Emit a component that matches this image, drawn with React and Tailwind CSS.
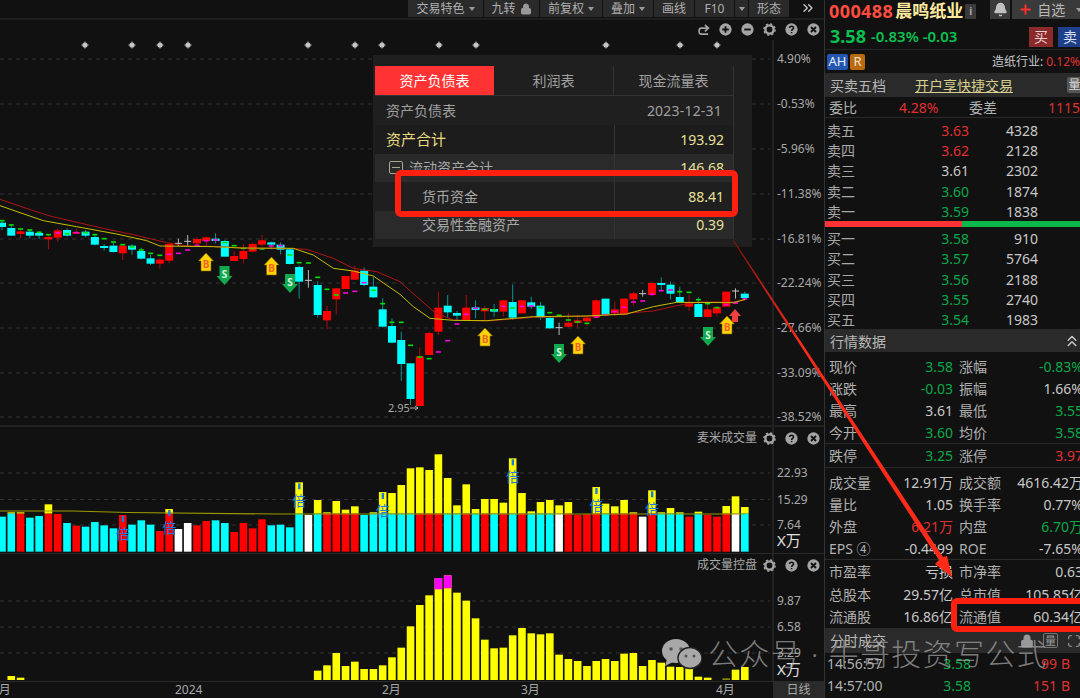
import { Bell, Plus, Lock, ChevronsRight, ChevronsUp, Maximize } from 'lucide-react';

// x position of bar i, shared by all three chart panes
const barX = (i) => 2 + i * 9.285;

// [type, wickTop, bodyTop, bodyBottom, wickBottom, markerColour, markerY]
const CANDLES_A = [
  ['c', 92, 98, 111, 120, 'g', 92], ['c', 104, 114, 137, 137, 'g', 105], ['r', 115, 124, 132, 145, 'g', 117], ['c', 118, 125, 137, 146, 'g', 120],
  ['c', 124, 129, 137, 147, 'g', 127], ['r', 135, 141, 148, 178, 'g', 134], ['r', 115, 121, 143, 155, 'm', 129], ['c', 115, 120, 137, 140, 'g', 131],
  ['r', 115, 126, 131, 132, 'm', 128], ['c', 120, 125, 137, 142, 'g', 128], ['c', 135, 141, 164, 166, 'g', 134], ['c', 162, 168, 174, 182, 'g', 146],
  ['c', 158, 167, 186, 188, 'g', 156], ['r', 165, 167, 190, 210, 'g', 164], ['c', 163, 167, 179, 194, 'g', 171], ['c', 173, 183, 206, 208, 'g', 180],
  ['c', 193, 205, 221, 225, 'g', 190], ['r', 205, 209, 221, 236, 'g', 196], ['r', 160, 162, 212, 219, 'm', 193], ['w', 146, 160, 161, 168, 'm', 190],
  ['w', 135, 154, 155, 168, 'm', 180], ['r', 142, 147, 160, 170, 'm', 166], ['r', 140, 142, 153, 170, 'm', 152], ['c', 130, 146, 153, 160, 'm', 150],
  ['c', 150, 153, 200, 200, 'g', 158], ['r', 183, 198, 213, 213, 'g', 167], ['r', 163, 183, 207, 220, 'g', 175], ['r', 158, 162, 185, 185, 'g', 176],
  ['r', 135, 151, 164, 170, 'g', 177], ['c', 155, 157, 164, 178, 'm', 168], ['c', 157, 164, 179, 193, 'm', 167], ['c', 175, 178, 222, 224, 'g', 195],
  ['c', 226, 231, 275, 326, 'g', 218], ['w', 240, 271, 272, 293, 'g', 219], ['c', 274, 285, 375, 383, 'g', 262], ['r', 347, 363, 391, 418, 'g', 298],
  ['r', 295, 295, 328, 373, 'g', 315], ['r', 258, 258, 297, 297, 'm', 309], ['r', 226, 242, 269, 270, 'm', 304], ['c', 232, 242, 285, 289, 'm', 278],
  ['c', 260, 290, 322, 324, 'g', 301], ['c', 325, 358, 410, 413, 'g', 341], ['c', 385, 408, 458, 460, 'g', 397],
].map((c) => [c[0], 190 + c[1] / 3, 190 + c[2] / 3, 190 + c[3] / 3, 190 + c[4] / 3, c[5], 190 + c[6] / 3]);

const CANDLES_B = [
  ['c', 275, 300, 372, 423, 'g', 247], ['c', 370, 370, 477, 495, 'g', 316], ['r', 322, 349, 498, 498, 'g', 351], ['r', 275, 279, 345, 345, 'g', 356],
  ['r', 155, 203, 275, 285, 'm', 336], ['c', 165, 197, 217, 233, 'm', 302], ['c', 213, 219, 227, 243, 'm', 252], ['r', 165, 203, 243, 243, 'm', 223],
  ['c', 181, 202, 210, 235, 'm', 205], ['r', 198, 204, 214, 240, 'g', 208], ['c', 192, 207, 215, 230, 'g', 210], ['r', 180, 181, 215, 230, 'm', 199],
  ['c', 133, 186, 233, 240, 'g', 204], ['r', 180, 181, 220, 220, 'm', 199], ['c', 170, 187, 200, 207, 'm', 198], ['c', 186, 197, 233, 240, 'g', 203],
  ['c', 233, 233, 265, 267, 'g', 218], ['w', 248, 263, 264, 285, 'g', 226], ['r', 218, 248, 260, 262, 'g', 240], ['r', 224, 241, 249, 263, 'g', 246],
  ['r', 225, 233, 244, 258, 'g', 250], ['r', 178, 181, 232, 235, 'm', 231], ['c', 176, 176, 224, 226, 'm', 224], ['r', 185, 208, 220, 228, 'm', 215],
  ['r', 176, 176, 224, 224, 'm', 202], ['r', 155, 160, 178, 197, 'm', 186], ['w', 150, 161, 162, 170, 'm', 183], ['r', 125, 129, 165, 168, 'm', 163],
  ['c', 112, 129, 135, 152, 'm', 152], ['c', 125, 134, 161, 178, 'm', 150], ['c', 140, 171, 187, 187, 'g', 155], ['r', 165, 187, 200, 213, 'g', 157],
  ['c', 172, 192, 231, 231, 'g', 179], ['r', 188, 208, 231, 233, 'g', 191], ['r', 198, 202, 220, 230, 'g', 203], ['r', 155, 155, 200, 200, 'm', 194],
  ['w', 145, 153, 154, 176, 'm', 189], ['c', 155, 161, 174, 181, 'm', 177],
].map((c) => [c[0], 240 + c[1] / 3, 240 + c[2] / 3, 240 + c[3] / 3, 240 + c[4] / 3, c[5], 240 + c[6] / 3]);

const CANDLES = [...CANDLES_A, ...CANDLES_B];

const pts = (list, ox, oy) => list.map(([x, y]) => `${ox + x / 3},${oy + y / 3}`).join(' ');

const RED_MA =
  pts([[0, 28], [100, 62], [150, 78], [300, 113], [400, 134], [500, 158], [560, 168], [630, 169], [760, 175], [860, 175], [920, 178], [1000, 205], [1060, 235], [1130, 245], [1200, 275]], 0, 190) +
  ' ' +
  pts([[50, 170], [105, 218], [160, 240], [260, 243], [400, 232], [500, 230], [580, 228], [650, 222], [760, 213], [830, 197], [900, 186], [1000, 186], [1035, 180]], 400, 240);

const YELLOW_MA =
  pts([[0, 47], [60, 68], [130, 92], [230, 110], [350, 132], [440, 152], [480, 168], [640, 170], [720, 174], [880, 175], [940, 195], [1000, 235], [1060, 243], [1120, 258], [1200, 313]], 0, 190) +
  ' ' +
  pts([[40, 200], [90, 235], [160, 241], [260, 242], [400, 230], [560, 228], [680, 222], [760, 200], [830, 187], [1000, 188], [1035, 178]], 400, 240);

const VOLUME = [
  [275, 'c'], [262, 'c'], [262, 'r'], [278, 'c'], [273, 'c'], [238, 'r'], [267, 'r'], [294, 'c'], [302, 'r'], [305, 'c'], [291, 'c'], [301, 'c'], [310, 'c'], [270, 'r'],
  [299, 'c'], [286, 'c'], [299, 'c'], [318, 'r'], [252, 'r'], [312, 'w'], [294, 'w'], [301, 'r'], [288, 'r'], [286, 'c'], [294, 'c'], [321, 'r'], [294, 'r'], [310, 'r'],
  [283, 'r'], [301, 'c'], [299, 'c'], [307, 'c'], [172, 'c'], [270, 'w'], [225, 'c'], [262, 'r'], [228, 'r'], [254, 'r'], [244, 'r'], [270, 'c'], [262, 'c'], [201, 'c'],
  [204, 'c'], [180, 'c'], [130, 'c'], [127, 'r'], [135, 'r'], [88, 'r'], [159, 'c'], [241, 'c'], [178, 'r'], [252, 'c'], [222, 'r'], [222, 'c'], [233, 'r'], [100, 'c'],
  [204, 'r'], [259, 'c'], [231, 'c'], [225, 'c'], [241, 'w'], [231, 'r'], [270, 'r'], [268, 'r'], [186, 'r'], [236, 'c'], [244, 'r'], [225, 'r'], [262, 'r'], [275, 'w'],
  [196, 'r'], [262, 'c'], [249, 'c'], [262, 'c'], [275, 'r'], [260, 'c'], [270, 'r'], [275, 'r'], [243, 'r'], [214, 'w'], [246, 'c'],
];

const BEI = [13, 18, 32, 41, 55, 64, 70];

// index -> top of the bar, zoomed units
const CONTROL = {
  1: 753, 2: 758, 34: 737, 35: 721, 36: 684, 37: 723, 38: 710, 39: 732, 40: 732, 41: 721, 42: 697, 43: 668, 44: 604, 45: 540, 46: 511, 47: 459, 48: 451, 49: 503, 50: 527,
  51: 580, 52: 644, 53: 670, 54: 668, 55: 631, 56: 609, 57: 625, 58: 628, 59: 625, 60: 689, 61: 702, 62: 708, 63: 723, 64: 708, 65: 702, 66: 708, 67: 686, 68: 684, 69: 723,
  70: 705, 71: 713, 72: 725, 73: 726, 74: 723, 75: 755, 76: 758, 78: 760, 79: 734, 80: 726,
};

const FILL = { c: '#00ffff', r: '#ff0000', w: '#ffffff' };
const WICK = { c: '#0e8f8f', r: '#a80c0c', w: '#b4b4b4' };

const STARS = [85, 132, 160, 188, 308, 355, 382, 439, 476, 606, 680, 717];
const MAIN_AXIS = [
  ['4.90%', 59], ['-0.53%', 104], ['-5.96%', 149], ['-11.38%', 194], ['-16.81%', 239], ['-22.24%', 283], ['-27.66%', 328], ['-33.09%', 373], ['-38.52%', 417],
];

function GridLine({ y }) {
  return <line x1="0" x2="770" y1={y} y2={y} stroke="#333" strokeDasharray="4 4" />;
}

function AxisText({ y, children, fill = '#a8a8a8', size = 12 }) {
  return (
    <text x="777" y={y + 4} fill={fill} fontSize={size}>
      {children}
    </text>
  );
}

function BuyMark({ x, y }) {
  return (
    <g transform={`translate(${x} ${y})`}>
      <path d="M0 -10 L7.5 -2 L5 -2 L5 8 L-5 8 L-5 -2 L-7.5 -2 Z" fill="#ffd400" stroke="#7a5c00" strokeWidth="0.6" />
      <text x="0" y="5" textAnchor="middle" fontSize="10" fontWeight="700" fill="#f0652a">B</text>
    </g>
  );
}

function SellMark({ x, y }) {
  return (
    <g transform={`translate(${x} ${y})`}>
      <path d="M0 11 L8 2 L5 2 L5 -8 L-5 -8 L-5 2 L-8 2 Z" fill="#12a94e" />
      <text x="0" y="4" textAnchor="middle" fontSize="10" fontWeight="700" fill="#d8f5e0">S</text>
    </g>
  );
}

function MainChart() {
  return (
    <svg viewBox="0 20 824 405" className="block w-[824px] h-[405px]">
      {MAIN_AXIS.map(([, y]) => (
        <GridLine key={y} y={y} />
      ))}
      {STARS.map((x) => (
        <g key={x} fill="#c4c4c4">
          <circle cx={x} cy={45} r="2.6" />
          <rect x={x - 3.6} y={44.6} width="7.2" height="0.8" />
          <rect x={x - 0.4} y={41.4} width="0.8" height="7.2" />
        </g>
      ))}
      {CANDLES.map((c, i) => {
        const x = barX(i);
        const [t, wt, bt, bb, wb, mc, my] = c;
        return (
          <g key={i}>
            <line x1={x} x2={x} y1={wt} y2={wb} stroke={WICK[t]} />
            {t === 'w' ? (
              <line x1={x - 3.5} x2={x + 3.5} y1={bt} y2={bt} stroke="#c8c8c8" />
            ) : (
              <rect x={x - 4} y={bt} width="8" height={bb - bt} fill={FILL[t]} />
            )}
            <rect x={x - 2.5} y={my - 0.8} width="5" height="1.6" fill={mc === 'g' ? '#00e000' : '#ff00e0'} />
          </g>
        );
      })}
      <polyline points={RED_MA} fill="none" stroke="#b01414" strokeWidth="1" />
      <polyline points={YELLOW_MA} fill="none" stroke="#c4c000" strokeWidth="1" />
      <text x="388" y="412" fontSize="11" fill="#a8a8a8">2.95</text>
      <path d="M410 408 h8 m-3 -2 l3 2 l-3 2" stroke="#a8a8a8" fill="none" />
      <BuyMark x={206} y={263} />
      <SellMark x={224.5} y={274} />
      <BuyMark x={271.5} y={267} />
      <SellMark x={290} y={282} />
      <BuyMark x={485} y={338} />
      <SellMark x={559} y={352} />
      <BuyMark x={578} y={346} />
      <SellMark x={708} y={335} />
      <BuyMark x={727} y={326} />
      <path d="M735 309 L741 316 L738 316 L738 322 L732 322 L732 316 L729 316 Z" fill="#f04040" />
      <line x1="773" x2="773" y1="40" y2="425" stroke="#333" />
      {MAIN_AXIS.map(([label, y]) => (
        <AxisText key={label} y={y}>{label}</AxisText>
      ))}
    </svg>
  );
}

function VolumeChart() {
  const y = (z) => 425 + z / 3;
  const base = y(380);
  const split = y(266);
  return (
    <svg viewBox="0 427 824 127" className="block w-[824px] h-[127px]">
      {[473, 499.5, 525].map((g) => (
        <GridLine key={g} y={g} />
      ))}
      {VOLUME.map(([top, t], i) => {
        const x = barX(i) - 3.8;
        const ty = y(top);
        return (
          <g key={i}>
            {ty < split && <rect x={x} y={ty} width="7.6" height={split - ty} fill="#ffff00" />}
            <rect x={x} y={Math.max(ty, split)} width="7.6" height={base - Math.max(ty, split)} fill={FILL[t]} />
          </g>
        );
      })}
      <polyline points={`0,511 72,511 128,512.5 278,514 745,514`} fill="none" stroke="#9a9a00" strokeWidth="1.2" />
      {BEI.map((i) => {
        const top = y(VOLUME[i][0]);
        return (
          <g key={i}>
            <rect x={barX(i) - 1} y={top + 1} width="2.4" height="6" fill="#1e78e0" />
            <text x={barX(i)} y={top + 24} textAnchor="middle" fontSize="14" fill="#1e78e0">倍</text>
          </g>
        );
      })}
      <line x1="773" x2="773" y1="427" y2="553" stroke="#333" />
      <AxisText y={473}>22.93</AxisText>
      <AxisText y={499.5}>15.29</AxisText>
      <AxisText y={525}>7.64</AxisText>
      <AxisText y={542} fill="#e0e0e0" size={15}>X万</AxisText>
    </svg>
  );
}

function ControlChart() {
  const y = (z) => 425 + z / 3;
  const base = y(765);
  return (
    <svg viewBox="0 554 824 127" className="block w-[824px] h-[127px]">
      {[601, 627, 653].map((g) => (
        <GridLine key={g} y={g} />
      ))}
      {Object.entries(CONTROL).map(([i, top]) => {
        const x = barX(Number(i)) - 3.8;
        const ty = y(top);
        const dim = Number(i) === 78;
        const pink = { 47: y(493), 48: y(490) }[i];
        return (
          <g key={i}>
            <rect x={x} y={ty} width="7.6" height={base - ty} fill={dim ? '#8a8a00' : '#ffff00'} />
            {pink && <rect x={x} y={ty} width="7.6" height={pink - ty} fill="#ff00ff" />}
          </g>
        );
      })}
      <line x1="773" x2="773" y1="554" y2="681" stroke="#333" />
      <AxisText y={601}>9.87</AxisText>
      <AxisText y={627}>6.58</AxisText>
      <AxisText y={653}>3.29</AxisText>
      <AxisText y={671} fill="#e0e0e0" size={15}>X万</AxisText>
    </svg>
  );
}

function RoundIcon({ kind }) {
  return (
    <svg viewBox="0 0 14 14" className="w-[13px] h-[13px]">
      {kind === 'gear' ? (
        <g>
          <circle cx="7" cy="7" r="4.4" fill="none" stroke="#a4a4a4" strokeWidth="2.6" />
          <circle cx="7" cy="7" r="6" fill="none" stroke="#a4a4a4" strokeWidth="1.6" strokeDasharray="2.4 2.3" />
        </g>
      ) : (
        <circle cx="7" cy="7" r="6.6" fill="#a4a4a4" />
      )}
      {kind === 'plus' && <path d="M3.5 7h7M7 3.5v7" stroke="#111" strokeWidth="2" />}
      {kind === 'minus' && <path d="M3.5 7h7" stroke="#111" strokeWidth="2" />}
      {kind === 'close' && <path d="M4.3 4.3l5.4 5.4M9.7 4.3l-5.4 5.4" stroke="#111" strokeWidth="2" />}
      {kind === 'help' && (
        <path d="M4.9 5.4c0-2.6 4.3-2.6 4.3-.1 0 1.5-2.1 1.6-2.1 3.2M7.1 9.6v1.5" fill="none" stroke="#111" strokeWidth="1.7" />
      )}
    </svg>
  );
}

function PaneHead({ title }) {
  return (
    <div className="absolute top-[3px] right-[4px] flex items-center h-[16px] text-[12px] text-[#a8a8a8]">
      <span className="mr-[6px]">{title}</span>
      <span className="flex items-center gap-[9px]">
        <RoundIcon kind="gear" />
        <RoundIcon kind="help" />
        <RoundIcon kind="close" />
      </span>
    </div>
  );
}

function ToolBtn({ w, children, caret }) {
  return (
    <div className={`${w} h-[17px] bg-[#2a2a2a] flex items-center justify-center gap-[4px] text-[12px] text-[#b0b0b0] leading-none`}>
      {children}
      {caret && <span className="w-0 h-0 border-x-[3.5px] border-x-transparent border-t-[4px] border-t-[#999]" />}
    </div>
  );
}

function Toolbar() {
  return (
    <div className="h-[20px] flex items-start pl-[408px] gap-px border-b-2 border-[#1e1e1e]">
      <ToolBtn w="w-[75px]" caret>交易特色</ToolBtn>
      <ToolBtn w="w-[55px]">
        九转
        <Lock size={12} fill="#999" stroke="#999" />
      </ToolBtn>
      <ToolBtn w="w-[62px]" caret>前复权</ToolBtn>
      <ToolBtn w="w-[50px]" caret>叠加</ToolBtn>
      <ToolBtn w="w-[40px]">画线</ToolBtn>
      <ToolBtn w="w-[39px]">F10</ToolBtn>
      <ToolBtn w="w-[13px]" caret />
      <ToolBtn w="w-[40px]">形态</ToolBtn>
      <div className="ml-[10px]">
        <ChevronsRight size={16} stroke="#c8c8c8" strokeWidth={2} />
      </div>
    </div>
  );
}

function XAxis() {
  const labels = [
    ['12月', 'left-[-15px]'],
    ['2024', 'left-[175px]'],
    ['2月', 'left-[382px]'],
    ['3月', 'left-[521px]'],
    ['4月', 'left-[716px]'],
  ];
  return (
    <div className="h-[17px] relative border-t border-[#2a2a2a] text-[12px] leading-[16px] text-[#a8a8a8]">
      {labels.map(([t, pos]) => (
        <span key={t} className={`absolute top-0 ${pos}`}>{t}</span>
      ))}
      <div className="absolute right-0 top-0 w-[51px] h-[16px] bg-[#2a2a2a] flex items-center justify-center">日线</div>
    </div>
  );
}

function FinRow({ bg, label, value, labelClass = 'text-[#a8a8a8]', valueClass = 'text-[#e8e098]', indent = 'pl-[11px]', icon }) {
  return (
    <div className={`flex items-center h-[28.5px] ${bg}`}>
      <div className={`w-[239px] flex items-center ${indent} ${labelClass}`}>
        {icon}
        {label}
      </div>
      <div className={`flex-1 h-full flex items-center justify-end pr-[9px] border-l border-[#333] ${valueClass}`}>{value}</div>
    </div>
  );
}

function FinancePanel() {
  return (
    <div className="absolute left-[373px] top-[55px] w-[379px] h-[192px] bg-[#1f1f1f] pt-[11px] pl-[2px] text-[14px]">
      <div className="w-[359px] border-r border-[#333]">
        <div className="flex h-[30px] border-b border-[#333] text-[#a0a0a0] items-stretch">
          <div className="w-[119px] bg-[#ff3333] text-white flex items-center justify-center">资产负债表</div>
          <div className="w-[120px] flex items-center justify-center border-r border-[#333]">利润表</div>
          <div className="flex-1 flex items-center justify-center">现金流量表</div>
        </div>
        <div className="flex items-center justify-between h-[29px] pl-[11px] pr-[11px] text-[#a0a0a0] bg-[#1f1f1f]">
          <span>资产负债表</span>
          <span className="tracking-[0.2px]">2023-12-31</span>
        </div>
        <FinRow bg="bg-[#1c1c1c]" label="资产合计" value="193.92" labelClass="text-[#e8dc80] text-[15px]" />
        <FinRow
          bg="bg-[#2a2a2a]"
          label="流动资产合计"
          value="146.68"
          indent="pl-[14px]"
          icon={
            <span className="w-[14px] h-[13px] mr-[6px] border border-[#a8a890] rounded-[2px] flex items-center justify-center">
              <span className="w-[8px] h-px bg-[#a8a890]" />
            </span>
          }
        />
        <FinRow bg="bg-[#1f1f1f]" label="货币资金" value="88.41" indent="pl-[47px]" />
        <FinRow bg="bg-[#2a2a2a]" label="交易性金融资产" value="0.39" indent="pl-[47px]" />
      </div>
    </div>
  );
}

function DepthRow({ label, price, vol, color }) {
  return (
    <div className="flex items-center h-[20.3px]">
      <span className="w-[32px] pl-[2px] text-[#a8a8a8]">{label}</span>
      <span className={`w-[112px] text-right ${color}`}>{price}</span>
      <span className="w-[69px] text-right text-[#c8c8c8]">{vol}</span>
    </div>
  );
}

const RED = 'text-[#e03030]';
const GREEN = 'text-[#0aa84a]';
const PLAIN = 'text-[#c8c8c8]';

const SELLS = [
  ['卖五', '3.63', '4328', RED],
  ['卖四', '3.62', '2128', RED],
  ['卖三', '3.61', '2302', PLAIN],
  ['卖二', '3.60', '1874', GREEN],
  ['卖一', '3.59', '1838', GREEN],
];
const BUYS = [
  ['买一', '3.58', '910', GREEN],
  ['买二', '3.57', '5764', GREEN],
  ['买三', '3.56', '2188', GREEN],
  ['买四', '3.55', '2740', GREEN],
  ['买五', '3.54', '1983', GREEN],
];

function QuoteRow({ a, av, ac = PLAIN, b, bv, bc = PLAIN, h = 'h-[22px]' }) {
  return (
    <div className={`flex items-center ${h}`}>
      <span className="w-[50px] pl-[4px] shrink-0 text-[#b0b0b0] whitespace-nowrap">{a}</span>
      <span className={`w-[78px] text-right whitespace-nowrap ${ac}`}>{av}</span>
      <span className="w-[56px] pl-[6px] shrink-0 text-[#b0b0b0] whitespace-nowrap">{b}</span>
      <span className={`w-[74px] text-right whitespace-nowrap ${bc}`}>{bv}</span>
    </div>
  );
}

function SideHead({ children, h = 'h-[22px]' }) {
  return <div className={`${h} bg-[#2a2a2a] flex items-center pl-[5px] text-[#b8b8b8] relative`}>{children}</div>;
}

function SidePanel() {
  return (
    <div className="w-[256px] shrink-0 border-l border-[#333] text-[14px] overflow-hidden">
      <div className="w-[258px]">
        <div className="h-[24px] flex items-start pl-[4px] pt-px">
          <span className="text-[18px] leading-[20px] font-bold text-[#ff4d40] tracking-[0.4px]">000488</span>
          <span className="ml-[2px] text-[17px] leading-[20px] font-bold text-[#ffeaa0]">晨鸣纸业</span>
          <span className="ml-[2px] w-[11px] h-[15px] bg-[#3a3a3a] mt-[3px] flex items-center justify-center text-[10px] font-bold text-[#aaa]">i</span>
          <span className="ml-[14px] w-[20px] h-[19px] -mt-px bg-[#3a3a3a] flex items-center justify-center">
            <Bell size={15} fill="#c0c0c0" stroke="#c0c0c0" />
          </span>
          <span className="ml-[2px] flex-1 h-[19px] -mt-px bg-[#3a3a3a] flex items-center pl-[6px] gap-[4px] text-[#b8b8b8]">
            <Plus size={15} stroke="#ff3030" strokeWidth={3} />
            自选
            <span className="ml-[7px] w-0 h-0 border-x-[3.5px] border-x-transparent border-t-[4px] border-t-[#999]" />
          </span>
        </div>
        <div className="h-[26px] flex items-center pl-[5px] border-b border-[#262626]">
          <span className="text-[18px] font-bold text-[#0ac050]">3.58</span>
          <span className="ml-[5px] text-[15px] font-semibold text-[#0ac050] whitespace-nowrap">-0.83% -0.03</span>
          <span className="ml-auto w-[24px] h-[20px] bg-[#8a2a2a] text-[#e8d0d0] flex items-center justify-center">买</span>
          <span className="ml-[5px] mr-px w-[24px] h-[20px] bg-[#1f3f8a] text-[#d8e0f0] flex items-center justify-center">卖</span>
        </div>
        <div className="h-[23px] flex items-center pl-[2px] text-[12px]">
          <span className="w-[21px] h-[16px] rounded-[2px] bg-[#2456b0] text-[#e8eeff] flex items-center justify-center text-[13px]">AH</span>
          <span className="ml-[2px] w-[15px] h-[16px] rounded-[2px] bg-[#b86a10] text-[#f4e4c8] flex items-center justify-center text-[13px]">R</span>
          <span className="ml-[127px] text-[#c8c8c8]">造纸行业:</span>
          <span className="ml-[3px] text-[#e03030]">0.12%</span>
        </div>
        <SideHead h="h-[24px]">
          <span>买卖五档</span>
          <span className="ml-[29px] text-[#d8cf90] underline">开户享快捷交易</span>
          <span className="absolute right-px top-[4px] w-[15px] h-[16px] bg-[#555] rounded-[2px] text-[12px] text-[#ddd] flex items-center justify-center leading-none">量</span>
        </SideHead>
        <div className="h-[21px] flex items-center border-b border-[#2a2a2a] pl-[4px] text-[#b0b0b0]">
          <span className="w-[70px]">委比</span>
          <span className={`w-[40px] ${RED}`}>4.28%</span>
          <span className="ml-[30px] w-[79px]">委差</span>
          <span className={RED}>1115</span>
        </div>
        <div className="pt-[2px]">
          {SELLS.map(([l, p, v, c]) => (
            <DepthRow key={l} label={l} price={p} vol={v} color={c} />
          ))}
        </div>
        <div className="h-[6px] flex">
          <div className="w-[137px] bg-[#ff3333]" />
          <div className="flex-1 bg-[#0bb84c]" />
        </div>
        <div className="pt-px border-b border-[#2a2a2a] h-[103px]">
          {BUYS.map(([l, p, v, c]) => (
            <DepthRow key={l} label={l} price={p} vol={v} color={c} />
          ))}
        </div>
        <SideHead>
          行情数据
          <ChevronsUp className="absolute right-[2px] top-[2px]" size={18} stroke="#c8c8c8" />
        </SideHead>
        <div className="pt-[3px] border-b border-[#2a2a2a]">
          <QuoteRow a="现价" av="3.58" ac={GREEN} b="涨幅" bv="-0.83%" bc={GREEN} />
          <QuoteRow a="涨跌" av="-0.03" ac={GREEN} b="振幅" bv="1.66%" />
          <QuoteRow a="最高" av="3.61" b="最低" bv="3.55" bc={GREEN} />
          <QuoteRow a="今开" av="3.60" ac={GREEN} b="均价" bv="3.58" bc={GREEN} />
        </div>
        <div className="border-b border-[#2a2a2a] h-[24px] flex items-center">
          <QuoteRow a="跌停" av="3.25" ac={GREEN} b="涨停" bv="3.97" bc={RED} />
        </div>
        <div className="pt-[3px] border-b border-[#2a2a2a]">
          <QuoteRow a="成交量" av="12.91万" b="成交额" bv="4616.42万" />
          <QuoteRow a="量比" av="1.05" b="换手率" bv="0.77%" />
          <QuoteRow a="外盘" av="6.21万" ac={RED} b="内盘" bv="6.70万" bc={GREEN} />
          <QuoteRow a="EPS ④" av="-0.4499" b="ROE" bv="-7.65%" />
        </div>
        <div className="border-b border-[#2a2a2a]">
          <QuoteRow a="市盈率" av="亏损" b="市净率" bv="0.63" h="h-[22.5px]" />
          <QuoteRow a="总股本" av="29.57亿" b="总市值" bv="105.85亿" h="h-[22.5px]" />
          <QuoteRow a="流通股" av="16.86亿" b="流通值" bv="60.34亿" h="h-[22.5px]" />
        </div>
        <SideHead h="h-[24px]">
          分时成交
          <Lock className="absolute right-[49px] top-[5px]" size={14} fill="#999" stroke="#999" />
          <span className="absolute right-[25px] top-[4px] w-[15px] h-[15px] border border-[#777] rounded-[2px] text-[11px] text-[#999] flex items-center justify-center leading-none">量</span>
          <Maximize className="absolute right-[2px] top-[5px]" size={14} stroke="#999" />
        </SideHead>
        {[
          ['14:56:57', '3.58', '99', RED],
          ['14:57:00', '3.58', '151', RED],
          ['15:00:00', '3.59', '1707', 'text-[#e020e0]'],
        ].map(([t, p, v, c]) => (
          <div key={t} className="h-[21.5px] flex items-center whitespace-nowrap">
            <span className="w-[62px] pl-[2px] text-[#b0b0b0]">{t}</span>
            <span className={`w-[84px] text-right ${GREEN}`}>{p}</span>
            <span className={`w-[86px] text-right ${c}`}>{v}</span>
            <span className={`ml-[4px] ${RED}`}>B</span>
          </div>
        ))}
      </div>
    </div>
  );
}

function Annotations() {
  return (
    <>
      <svg className="absolute inset-0 w-[1080px] h-[698px] pointer-events-none" viewBox="0 0 1080 698">
        <defs>
          <linearGradient id="arrowFade" gradientUnits="userSpaceOnUse" x1="733" y1="241" x2="952" y2="577">
            <stop offset="0" stopColor="#7a1410" />
            <stop offset="0.3" stopColor="#ff2a18" />
            <stop offset="1" stopColor="#ff2a18" />
          </linearGradient>
        </defs>
        <path d="M733 241 L734 240.4 L943 557 L947 556 L952 577 L935 564 L939 560 Z" fill="url(#arrowFade)" />
      </svg>
      <div className="absolute left-[395px] top-[170px] w-[343px] h-[47px] border-[6px] border-[#ff2010] rounded-[6px]" />
      <div className="absolute left-[951px] top-[598px] w-[140px] h-[34px] border-[6px] border-[#ff2010] rounded-[6px]" />
      {/* 公众号 watermark */}
      <div className="absolute left-[660px] top-[638px] flex items-center pointer-events-none">
        <svg viewBox="0 0 42 32" className="w-[42px] h-[32px]">
          <ellipse cx="16" cy="13" rx="14" ry="12" fill="#a8a8a8" />
          <path d="M7 21 L5 28 L13 24 Z" fill="#a8a8a8" />
          <circle cx="11" cy="11" r="1.8" fill="#555" />
          <circle cx="21" cy="11" r="1.8" fill="#555" />
          <ellipse cx="30" cy="20" rx="12" ry="10.5" fill="#a8a8a8" stroke="#222" strokeWidth="1.5" />
          <circle cx="26" cy="18" r="1.5" fill="#555" />
          <circle cx="34" cy="18" r="1.5" fill="#555" />
        </svg>
        <span className="ml-[6px] text-[30px] font-light leading-none tracking-[1.3px] whitespace-nowrap text-[#aaaaaa]/70">公众号 · 牛哥投资写公式</span>
      </div>
    </>
  );
}

export default function App() {
  return (
    <div className="relative w-[1080px] h-[698px] overflow-hidden flex bg-[#111111] font-['Noto_Sans','Noto_Sans_CJK_SC',sans-serif]">
      <div className="w-[824px] shrink-0 flex flex-col">
        <Toolbar />
        <div className="relative h-[405px]">
          <MainChart />
          <div className="absolute top-[3px] right-[4px] flex items-center gap-[9px]">
            <svg viewBox="0 0 14 14" className="w-[13px] h-[13px]">
              <path d="M12 12H4.5C1.5 12 1.5 5.5 4.5 5.5H12M8.5 2l3.8 3.5L8.5 9" fill="none" stroke="#a4a4a4" strokeWidth="1.8" />
            </svg>
            <RoundIcon kind="plus" />
            <RoundIcon kind="minus" />
            <RoundIcon kind="gear" />
            <RoundIcon kind="help" />
            <RoundIcon kind="close" />
          </div>
        </div>
        <div className="relative h-[128px] border-t-2 border-[#222]">
          <VolumeChart />
          <PaneHead title="麦米成交量" />
        </div>
        <div className="relative h-[128px] border-t border-[#2a2a2a]">
          <ControlChart />
          <PaneHead title="成交量控盘" />
        </div>
        <XAxis />
      </div>
      <SidePanel />
      <FinancePanel />
      <Annotations />
    </div>
  );
}
